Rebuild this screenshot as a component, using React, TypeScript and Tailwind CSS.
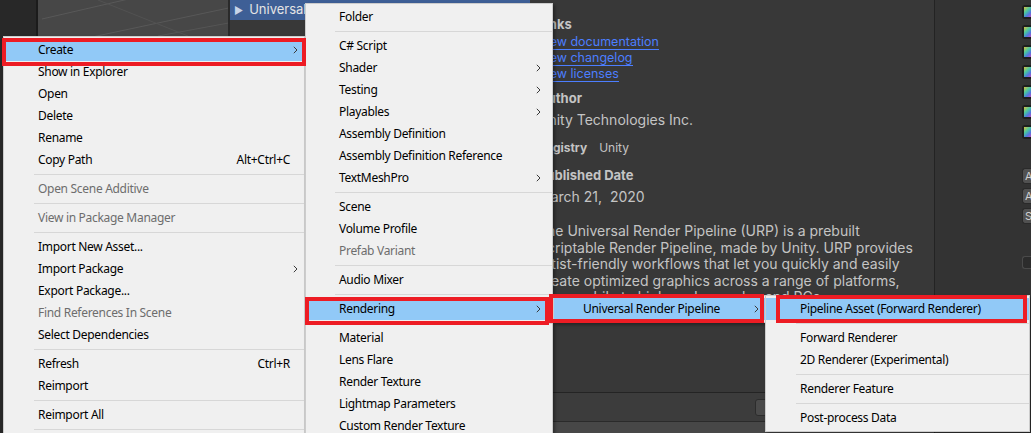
import React from 'react';

type Item = {
  label?: string;
  shortcut?: string;
  sub?: boolean;
  disabled?: boolean;
  sep?: boolean;
  active?: boolean;
};

const createMenu: Item[] = [
  { label: 'Create', sub: true, active: true },
  { label: 'Show in Explorer' },
  { label: 'Open' },
  { label: 'Delete' },
  { label: 'Rename' },
  { label: 'Copy Path', shortcut: 'Alt+Ctrl+C' },
  { sep: true },
  { label: 'Open Scene Additive', disabled: true },
  { sep: true },
  { label: 'View in Package Manager', disabled: true },
  { sep: true },
  { label: 'Import New Asset...' },
  { label: 'Import Package', sub: true },
  { label: 'Export Package...' },
  { label: 'Find References In Scene', disabled: true },
  { label: 'Select Dependencies' },
  { sep: true },
  { label: 'Refresh', shortcut: 'Ctrl+R' },
  { label: 'Reimport' },
  { sep: true },
  { label: 'Reimport All' },
  { sep: true },
];

const assetMenu: Item[] = [
  { label: 'Folder' },
  { sep: true },
  { label: 'C# Script' },
  { label: 'Shader', sub: true },
  { label: 'Testing', sub: true },
  { label: 'Playables', sub: true },
  { label: 'Assembly Definition' },
  { label: 'Assembly Definition Reference' },
  { label: 'TextMeshPro', sub: true },
  { sep: true },
  { label: 'Scene' },
  { label: 'Volume Profile' },
  { label: 'Prefab Variant', disabled: true },
  { sep: true },
  { label: 'Audio Mixer' },
  { sep: true },
  { label: 'Rendering', sub: true, active: true },
  { sep: true },
  { label: 'Material' },
  { label: 'Lens Flare' },
  { label: 'Render Texture' },
  { label: 'Lightmap Parameters' },
  { label: 'Custom Render Texture' },
];

const renderingMenu: Item[] = [{ label: 'Universal Render Pipeline', sub: true, active: true }];

const urpMenu: Item[] = [
  { label: 'Pipeline Asset (Forward Renderer)', active: true },
  { sep: true },
  { label: 'Forward Renderer' },
  { label: '2D Renderer (Experimental)' },
  { sep: true },
  { label: 'Renderer Feature' },
  { sep: true },
  { label: 'Post-process Data' },
];

function Chevron() {
  return (
    <svg width="5" height="8" viewBox="0 0 5 8" className="block">
      <path d="M0.8 0.8 L4 4 L0.8 7.2" fill="none" stroke="#3a3a3a" strokeWidth="1" />
    </svg>
  );
}

function Menu({
  items,
  className,
  textPad,
  sepPad,
  arrowRight,
}: {
  items: Item[];
  className: string;
  textPad: string;
  sepPad: string;
  arrowRight: string;
}) {
  return (
    <div
      className={`absolute bg-[#f0f0f0] border border-[#cccccc] py-[2px] font-['Noto_Sans',sans-serif] text-[12px] tracking-[-0.3px] shadow-[2px_2px_3px_rgba(0,0,0,0.35)] ${className}`}
    >
      {items.map((it, i) =>
        it.sep ? (
          <div key={i} className={`h-[7px] flex items-center ${sepPad}`}>
            <div className="h-px flex-1 bg-[#d7d7d7]" />
          </div>
        ) : (
          <div
            key={i}
            className={`relative h-[22px] flex items-center whitespace-nowrap ${textPad} ${
              it.active ? 'bg-[#91c9f7]' : ''
            } ${it.disabled ? 'text-[#6d6d6d]' : 'text-black'}`}
          >
            <span>{it.label}</span>
            {it.shortcut && <span className="absolute right-[14px]">{it.shortcut}</span>}
            {it.sub && (
              <span className={`absolute top-[7px] ${arrowRight}`}>
                <Chevron />
              </span>
            )}
          </div>
        )
      )}
    </div>
  );
}

function SceneGrid({ className }: { className: string }) {
  return (
    <svg className={className} width="100%" height="100%" preserveAspectRatio="none">
      <line x1="4" y1="19" x2="95" y2="-2" stroke="#585858" strokeWidth="1" />
      <line x1="40" y1="40" x2="200" y2="6" stroke="#585858" strokeWidth="1" />
      <line x1="120" y1="36" x2="196" y2="22" stroke="#555555" strokeWidth="1" />
      <line x1="60" y1="0" x2="150" y2="36" stroke="#525252" strokeWidth="1" />
    </svg>
  );
}

export default function App() {
  const icons = [0, 1, 2, 3, 4, 5, 6];

  return (
    <div className="relative w-[1031px] h-[433px] overflow-hidden bg-[#383838] flex font-['Inter',sans-serif]">
      {/* left strip */}
      <div className="w-[38px] h-full bg-[#282828] border-r-2 border-[#1b1b1b] shrink-0" />

      {/* scene view */}
      <div className="relative w-[192px] h-full bg-[#474747] shrink-0 border-r-2 border-[#2a2a2a]">
        <SceneGrid className="absolute inset-0" />
      </div>

      {/* package manager */}
      <div className="flex-1 flex flex-col h-full">
        <div className="h-[392px] flex">
          <div className="w-[300px] shrink-0 bg-[#383838]">
            <div className="h-[20px] bg-[#3e5f96] flex items-center pl-[4px] gap-[6px] text-[#e4e4e4] text-[13px] whitespace-nowrap">
              <span className="text-[10px] text-[#c8d4e8]">▶</span>
              <span>Universal RP</span>
            </div>
          </div>
          <div className="flex-1 pl-[8px] text-[#c4c4c4] whitespace-nowrap">
            <div className="mt-[14px] text-[13px] font-bold leading-[20px]">Links</div>
            <div className="flex flex-col items-start text-[12.5px] text-[#4c7eff] leading-[16px]">
              <span className="border-b border-[#4c7eff] leading-[15px]">View documentation</span>
              <span className="border-b border-[#4c7eff] leading-[15px]">View changelog</span>
              <span className="border-b border-[#4c7eff] leading-[15px]">View licenses</span>
            </div>
            <div className="mt-[6px] text-[13px] font-bold leading-[20px]">Author</div>
            <div className="mt-[2px] text-[14px] leading-[20px]">Unity Technologies Inc.</div>
            <div className="mt-[9px] flex gap-[12px] text-[12px] leading-[18px]">
              <span className="font-bold">Registry</span>
              <span>Unity</span>
            </div>
            <div className="mt-[8px] text-[13px] font-bold leading-[20px]">Published Date</div>
            <div className="mt-[2px] text-[14px] leading-[20px]">March 21,&nbsp; 2020</div>
            <div className="mt-[16px] text-[14px] leading-[16.6px]">
              <div>The Universal Render Pipeline (URP) is a prebuilt</div>
              <div>Scriptable Render Pipeline, made by Unity. URP provides</div>
              <div>artist-friendly workflows that let you quickly and easily</div>
              <div>create optimized graphics across a range of platforms,</div>
              <div>from mobile to high-end consoles and PCs.</div>
            </div>
          </div>
        </div>
        <div className="h-[29px] bg-[#3c3c3c] border-t border-[#242424] flex items-center pl-[525px]">
          <div className="w-[16px] h-[17px] rounded-[3px] bg-[#4a4a4a] border border-[#2c2c2c]" />
        </div>
        <div className="flex-1 bg-[#474747] border-t border-[#2a2a2a]" />
      </div>

      {/* right column */}
      <div className="w-[97px] h-full shrink-0 bg-[#333333] border-l border-[#232323] flex flex-col items-end pt-[5px]">
        <div className="flex flex-col gap-[6px]">
          {icons.map((n) => (
            <div key={n} className="w-[9px] h-[14px] rounded-l-[3px] bg-[#1e1e1e] pl-[2px] py-[2px]">
              <div className="w-full h-full bg-[linear-gradient(135deg,#d8c040,#48c8a0_40%,#5078e0_70%,#c050c0)]" />
            </div>
          ))}
        </div>
        <div className="mt-[29px] flex flex-col gap-[4px]">
          {['A', 'A', 'S'].map((c, i) => (
            <div
              key={i}
              className="w-[9px] h-[16px] rounded-l-[3px] bg-[#515151] border border-r-0 border-[#2a2a2a] text-[11px] leading-[14px] pl-[2px] text-[#d0d0d0] overflow-hidden"
            >
              {c}
            </div>
          ))}
        </div>
        <div className="mt-[32px] w-[9px] h-[13px] rounded-l-[3px] bg-[#2c2c2c] border border-r-0 border-[#4a4a4a]" />
      </div>

      {/* context menus */}
      <Menu
        items={createMenu}
        className="left-[3px] top-[36px] w-[302px] h-[420px]"
        textPad="pl-[34px]"
        sepPad="pl-[30px]"
        arrowRight="right-[6px]"
      />
      <Menu
        items={assetMenu}
        className="left-[305px] top-[3px] w-[248px]"
        textPad="pl-[33px]"
        sepPad="pl-[29px]"
        arrowRight="right-[11px]"
      />
      <Menu
        items={renderingMenu}
        className="left-[553px] top-[295px] w-[213px]"
        textPad="pl-[29px]"
        sepPad="pl-[25px]"
        arrowRight="right-[6px]"
      />
      <Menu
        items={urpMenu}
        className="left-[765px] top-[295px] w-[265px]"
        textPad="pl-[34px]"
        sepPad="pl-[30px]"
        arrowRight="right-[7px]"
      />

      {/* red highlight annotations */}
      <div className="absolute left-[2px] top-[38px] w-[304px] h-[28px] border-[4px] border-[#ed1c24]" />
      <div className="absolute left-[305px] top-[297px] w-[244px] h-[28px] border-[4px] border-[#ed1c24]" />
      <div className="absolute left-[549px] top-[294px] w-[215px] h-[29px] border-[4px] border-[#ed1c24]" />
      <div className="absolute left-[776px] top-[295px] w-[251px] h-[28px] border-[4px] border-[#ed1c24]" />
    </div>
  );
}
